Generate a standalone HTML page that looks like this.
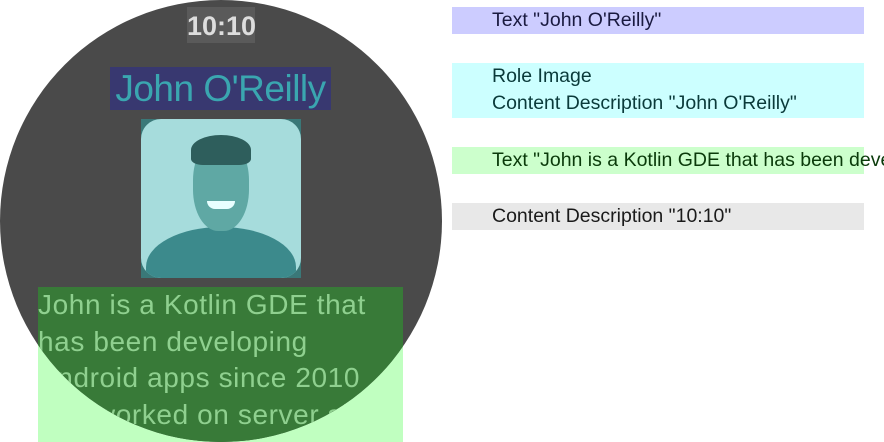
<!DOCTYPE html>
<html><head><style>
body{margin:0;width:884px;height:442px;background:#fff;position:relative;overflow:hidden;font-family:"Liberation Sans",sans-serif}
.a{position:absolute}
.circle{left:0;top:0;width:442px;height:442px;border-radius:50%;background:#4a4a4a;overflow:hidden}
.r{position:absolute;left:452px;width:412px;font-size:19.5px;line-height:27px;padding-left:40px;box-sizing:border-box;white-space:nowrap;overflow:hidden}
</style></head><body>
<div class="a" style="left:38px;top:287px;width:365px;height:155px;background:#c0ffc0"></div>
<div class="a circle">
 <div class="a" style="left:187px;top:7px;width:68px;height:36px;background:#5a5a5a;color:#ddd;font-size:27px;font-weight:bold;line-height:38px;text-align:center">10:10</div>
 <div class="a" style="left:110px;top:67px;width:221px;height:43px;background:#383870;color:#3aa6b0;font-size:37px;line-height:44px;text-align:center;white-space:nowrap;letter-spacing:-0.5px">John O'Reilly</div>
 <div class="a" style="left:141px;top:119px;width:160px;height:159px;background:#3a7878">
  <div class="a" style="left:0;top:0;width:160px;height:159px;border-radius:20px;background:#a6dcdc;overflow:hidden">
   <div class="a" style="left:5px;top:108px;width:150px;height:80px;border-radius:50% 50% 0 0;background:#3c8a8c"></div>
   <div class="a" style="left:52px;top:20px;width:56px;height:92px;border-radius:45%;background:#5fa8a4"></div>
   <div class="a" style="left:50px;top:16px;width:60px;height:30px;border-radius:50% 50% 20% 20%;background:#2e5e5c"></div>
   <div class="a" style="left:66px;top:82px;width:28px;height:8px;border-radius:0 0 14px 14px;background:#e8ffff"></div>
  </div>
 </div>
 <div class="a" style="left:38px;top:287px;width:365px;height:160px;background:#387a38;color:#8fd08f;font-size:28px;letter-spacing:0.6px;line-height:36.5px;white-space:nowrap">John is a Kotlin GDE that<br>has been developing<br>Android apps since 2010<br>and worked on server side<br>applications</div>
</div>
<div class="r" style="top:7px;background:#ccccff;color:#1a1a40">Text "John O'Reilly"</div>
<div class="r" style="top:63px;height:55px;background:#ccffff;color:#0a3a3a">Role Image<br>Content Description "John O'Reilly"</div>
<div class="a" style="left:452px;top:147px;width:432px;height:27px;overflow:hidden">
 <div class="a" style="left:0;top:0;width:412px;height:27px;background:#ccffcc"></div>
 <div class="a" style="left:40px;top:0;font-size:19.5px;line-height:27px;white-space:nowrap;color:#0a3a0a">Text "John is a Kotlin GDE that has been developing</div>
</div>
<div class="r" style="top:203px;background:#e8e8e8;color:#1a1a1a">Content Description "10:10"</div>
</body></html>
